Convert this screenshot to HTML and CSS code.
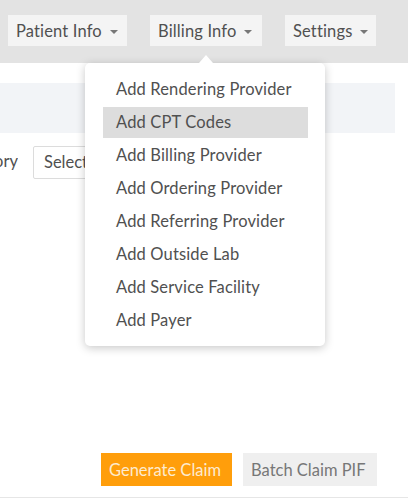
FILE: index.html
```html
<!DOCTYPE html>
<html>
<head>
<meta charset="utf-8">
<link rel="stylesheet" href="styles.css">
</head>
<body>
<div class="page">
  <div class="topbar">
    <div class="tab tab-patient">Patient Info <span class="caret"></span></div>
    <div class="tab tab-billing">Billing Info <span class="caret"></span>
      <div class="menu">
        <div class="menu-item">Add Rendering Provider</div>
        <div class="menu-item active">Add CPT Codes</div>
        <div class="menu-item">Add Billing Provider</div>
        <div class="menu-item">Add Ordering Provider</div>
        <div class="menu-item">Add Referring Provider</div>
        <div class="menu-item">Add Outside Lab</div>
        <div class="menu-item">Add Service Facility</div>
        <div class="menu-item">Add Payer</div>
      </div>
    </div>
    <div class="tab tab-settings">Settings <span class="caret"></span></div>
  </div>
  <div class="band"></div>
  <div class="form-row">
    <div class="label"><span>Category</span></div>
    <div class="select">Select</div>
  </div>
  <div class="actions">
    <div class="btn btn-primary">Generate Claim</div>
    <div class="btn btn-default">Batch Claim PIF</div>
  </div>
</div>
</body>
</html>
```

FILE: styles.css
```css
html, body {
  margin: 0;
  padding: 0;
  background: #ffffff;
}
body {
  font-family: Lato, "Open Sans", sans-serif;
  color: #505050;
  width: 408px;
  height: 499px;
  overflow: hidden;
}
.page {
  position: relative;
  height: 499px;
  display: flex;
  flex-direction: column;
}
.topbar {
  height: 63px;
  box-sizing: border-box;
  background: #e3e3e3;
  padding: 15px 0 0 8px;
  display: flex;
  gap: 23px;
  align-items: flex-start;
}
.tab {
  position: relative;
  height: 31px;
  box-sizing: border-box;
  background: #f4f4f4;
  font-size: 16.5px;
  display: flex;
  align-items: center;
  padding: 0 0 0 8px;
  white-space: nowrap;
  letter-spacing: 0.15px;
}
.tab-patient { width: 119px; }
.tab-billing { width: 112px; }
.tab-settings { width: 91px; }
.caret {
  display: inline-block;
  width: 0;
  height: 0;
  border-left: 4px solid transparent;
  border-right: 4px solid transparent;
  border-top: 4px solid #777;
  margin-left: 8px;
  margin-top: 2px;
}
.menu {
  position: absolute;
  top: 48px;
  left: -65px;
  width: 240px;
  box-sizing: border-box;
  background: #ffffff;
  border-radius: 5px;
  box-shadow: 0 2px 10px rgba(0, 0, 0, 0.22);
  padding: 11px 17px 10px 18px;
  display: flex;
  flex-direction: column;
  gap: 2px;
  z-index: 5;
}
.menu::before {
  content: "";
  position: absolute;
  top: -8px;
  left: 114px;
  width: 0;
  height: 0;
  border-left: 7px solid transparent;
  border-right: 7px solid transparent;
  border-bottom: 8px solid #ffffff;
}
.menu-item {
  height: 31px;
  line-height: 31px;
  padding-left: 13px;
  font-size: 16.5px;
  color: #505050;
  white-space: nowrap;
  letter-spacing: 0.15px;
}
.menu-item.active {
  background: #dddddd;
}
.band {
  margin-top: 20px;
  width: 395px;
  height: 50px;
  background: #f2f4f7;
}
.form-row {
  margin-top: 13px;
  display: flex;
  align-items: center;
  height: 33px;
}
.label {
  width: 18px;
  overflow: hidden;
  display: flex;
  justify-content: flex-end;
  font-size: 16.5px;
  white-space: nowrap;
  margin-right: 15px;
  margin-top: -4px;
}
.select {
  width: 120px;
  height: 33px;
  box-sizing: border-box;
  border: 1px solid #dcdcdc;
  border-radius: 2px;
  padding-left: 10px;
  line-height: 31px;
  font-size: 16.5px;
  color: #505050;
}
.actions {
  margin-top: auto;
  display: flex;
  gap: 11px;
  padding-left: 101px;
  padding-bottom: 11px;
  border-bottom: 1px solid #e6e6e6;
  margin-bottom: 1px;
}
.btn {
  height: 33px;
  box-sizing: border-box;
  font-size: 16.5px;
  display: flex;
  align-items: center;
  padding: 0 8px;
  white-space: nowrap;
}
.btn-primary {
  background: #ff9e0b;
  color: #fdebd0;
  width: 131px;
}
.btn-default {
  background: #efefef;
  color: #777;
  width: 134px;
}
```
